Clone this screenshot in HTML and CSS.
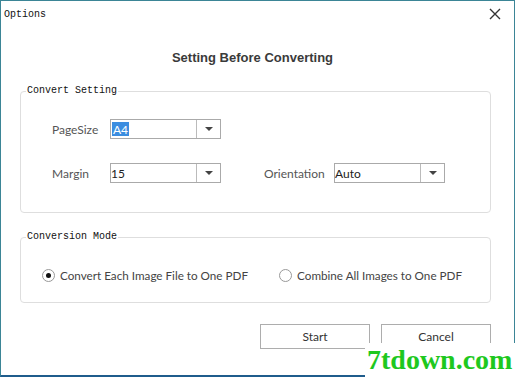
FILE: index.html
```html
<!DOCTYPE html>
<html lang="en">
<head>
    <meta charset="UTF-8">
    <title>Options</title>
    <link rel="stylesheet" href="styles.css">
</head>
<body>
    <div class="window">
        <div class="titlebar">
            <span class="title">Options</span>
            <svg class="close" width="12" height="12" viewBox="0 0 12 12">
                <path d="M1 1 L11 11 M11 1 L1 11" stroke="#333" stroke-width="1.4" fill="none"/>
            </svg>
        </div>
        <h1>Setting Before Converting</h1>

        <fieldset class="group settings">
            <legend>Convert Setting</legend>
            <div class="rows">
                <div class="row">
                    <label class="lbl">PageSize</label>
                    <div class="combo"><span class="val selected">A4</span><span class="arrow"></span></div>
                </div>
                <div class="row">
                    <label class="lbl">Margin</label>
                    <div class="combo"><span class="val">15</span><span class="arrow"></span></div>
                    <label class="lbl lbl-orient">Orientation</label>
                    <div class="combo"><span class="val">Auto</span><span class="arrow"></span></div>
                </div>
            </div>
        </fieldset>

        <fieldset class="group mode">
            <legend>Conversion Mode</legend>
            <div class="radios">
                <label class="radio"><span class="dot checked"></span>Convert Each Image File to One PDF</label>
                <label class="radio radio-2"><span class="dot"></span>Combine All Images to One PDF</label>
            </div>
        </fieldset>

        <div class="buttons">
            <button class="btn">Start</button>
            <button class="btn">Cancel</button>
        </div>
    </div>
    <div class="watermark">7tdown.com</div>
</body>
</html>
```

FILE: styles.css
```css
body {
    margin: 0;
    background: #fff;
    font-family: Lato, "Liberation Sans", sans-serif;
}
.window {
    position: relative;
    width: 515px;
    height: 377px;
    box-sizing: border-box;
    border: 1px solid #3b8596;
    border-bottom: 2px solid #1f5c8c;
    background: #fff;
}
.titlebar {
    height: 26px;
    display: flex;
    align-items: center;
    justify-content: space-between;
    padding: 0 13px 0 3px;
}
.title {
    font-family: "Liberation Mono", monospace;
    font-size: 10px;
    color: #111;
}
h1 {
    margin: 23px 10px 0 0;
    text-align: center;
    font-family: "Liberation Sans", Arial, sans-serif;
    font-size: 13px;
    font-weight: bold;
    color: #3a3a3a;
    line-height: 16px;
}
.group {
    margin: 0 23px 0 19px;
    padding: 0;
    border: 1px solid #dedede;
    border-radius: 4px;
}
.group legend {
    margin-left: 5px;
    padding: 0 1px;
    font-family: "Liberation Mono", monospace;
    font-size: 10px;
    color: #111;
    line-height: 10px;
}
.settings {
    margin-top: 20px;
    height: 127px;
    box-sizing: border-box;
}
.rows {
    padding: 23px 0 0 31px;
}
.row {
    display: flex;
    align-items: center;
    height: 20px;
    margin-bottom: 24px;
}
.lbl {
    width: 58px;
    font-size: 12px;
    color: #555;
}
.lbl-orient {
    width: 70px;
    margin-left: 43px;
}
.combo {
    display: flex;
    width: 111px;
    height: 20px;
    box-sizing: border-box;
    border: 1px solid #aaa;
    font-size: 12px;
    color: #222;
}
.val {
    flex: 1;
    display: flex;
    align-items: center;
}
.val.selected {
    flex: none;
    margin: 2px 0 2px 1px;
    padding: 0 1px;
    background: #3b8de0;
    color: #fff;
}
.arrow {
    width: 23px;
    margin-left: auto;
    border-left: 1px solid #bbb;
    position: relative;
}
.arrow::after {
    content: "";
    position: absolute;
    left: 8px;
    top: 7px;
    border-left: 4px solid transparent;
    border-right: 4px solid transparent;
    border-top: 4px solid #444;
}
.mode {
    margin-top: 19px;
    height: 71px;
    box-sizing: border-box;
}
.radios {
    display: flex;
    align-items: center;
    padding: 26px 0 0 21px;
}
.radio {
    display: flex;
    align-items: center;
    font-size: 11.7px;
    color: #444;
}
.radio-2 {
    margin-left: 31px;
}
.dot {
    width: 13px;
    height: 13px;
    box-sizing: border-box;
    border: 1px solid #999;
    border-radius: 50%;
    margin-right: 5px;
    position: relative;
}
.dot.checked::after {
    content: "";
    position: absolute;
    left: 3px;
    top: 3px;
    width: 5px;
    height: 5px;
    border-radius: 50%;
    background: #111;
}
.buttons {
    display: flex;
    justify-content: flex-end;
    gap: 11px;
    margin: 21px 23px 0 0;
}
.btn {
    width: 110px;
    height: 25px;
    border: 1px solid #adadad;
    background: #fff;
    font-family: Lato, "Liberation Sans", sans-serif;
    font-size: 12px;
    color: #333;
}
.watermark {
    position: absolute;
    left: 365px;
    top: 343px;
    width: 150px;
    height: 34px;
    background: #fff;
    font-family: "Liberation Serif", serif;
    font-size: 28px;
    font-weight: bold;
    line-height: 34px;
    color: #1ec81e;
    padding-left: 2px;
    box-sizing: border-box;
}
```
